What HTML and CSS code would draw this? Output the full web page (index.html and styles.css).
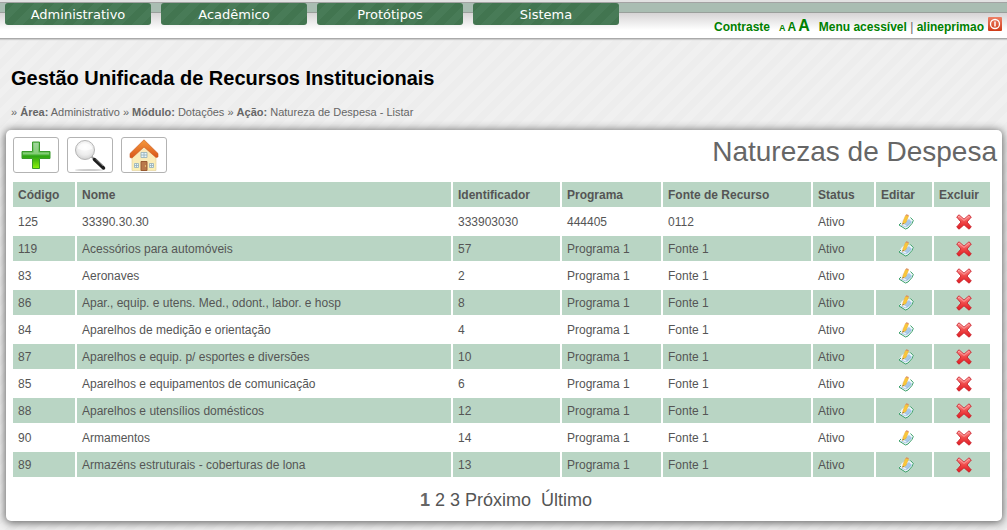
FILE: index.html
```html
<!DOCTYPE html>
<html lang="pt-BR">
<head>
<meta charset="utf-8">
<title>Gestão Unificada de Recursos Institucionais</title>
<link rel="stylesheet" href="styles.css">
</head>
<body>
<svg class="sprite" width="0" height="0" aria-hidden="true">
  <defs>
    <linearGradient id="leaf" x1="0" y1="0" x2="0" y2="1"><stop offset="0" stop-color="#7cc576"/><stop offset=".45" stop-color="#4fb83c"/><stop offset=".55" stop-color="#2ea513"/><stop offset="1" stop-color="#8df40c"/></linearGradient>
    <linearGradient id="roof" x1="0" y1="0" x2="0" y2="1"><stop offset="0" stop-color="#f59a3c"/><stop offset="1" stop-color="#d9541a"/></linearGradient>
    <linearGradient id="wall" x1="0" y1="0" x2="0" y2="1"><stop offset="0" stop-color="#f8e6bd"/><stop offset="1" stop-color="#fbf0b4"/></linearGradient>
    <radialGradient id="glass" cx=".5" cy=".35" r=".6"><stop offset="0" stop-color="#fff"/><stop offset=".7" stop-color="#ececec"/><stop offset="1" stop-color="#d6d6d6"/></radialGradient>
    <linearGradient id="ruby" x1="0" y1="0" x2="0" y2="1"><stop offset="0" stop-color="#ff9a9a"/><stop offset=".5" stop-color="#f04848"/><stop offset="1" stop-color="#e01a20"/></linearGradient>
    <linearGradient id="power" x1="0" y1="0" x2="0" y2="1"><stop offset="0" stop-color="#ee8066"/><stop offset="1" stop-color="#cf3a17"/></linearGradient>
    <symbol id="edit" viewBox="0 0 16 16">
      <path d="M4 6 7 4 14 4.500 15.500 7.500 10 14.500 7 14.500 1 10.500Z" fill="#f1f8fc"/>
      <path d="M5 9.500 11 5 14 8 9.500 12.500Z" fill="#a8c9e8"/>
      <path d="M12.500 3.500 15.300 6.500 14 9.500 10 14 7.500 15 1 11 3 9" fill="none" stroke="#3ca06a"/>
      <path d="M3 11 8 13 13 8.500" fill="none" stroke="#8fb4d8" stroke-width=".7"/>
      <path d="M7.500 1.500 10.500 2 8 8.500 4.500 10.500 5 7.500Z" fill="#f9c83a" stroke="#eda93a" stroke-width=".5"/>
      <path d="m7.500 1.500.8-1.300 2.400.7-.2 1.100Z" fill="#dd8b54"/><path d="m4.500 10.500.3-1.500 1 .6Z" fill="#444"/>
    </symbol>
    <symbol id="remove" viewBox="0 0 16 16">
      <path d="M3 .8 8 5.200 13 .8 15.300 3 11 8 15.300 13 13 15.200 8 10.800 3 15.200.7 13 5 8 .7 3Z" fill="url(#ruby)" stroke="#c8202a" stroke-width=".9" stroke-linejoin="round"/>
      <path d="m2 3 1.200-1L8 6.400l4.800-4.400" fill="none" stroke="#ffb3b0" stroke-width=".8"/>
    </symbol>
  </defs>
</svg>
<header class="topbar">
  <nav class="menu">
    <a href="#">Administrativo</a>
    <a href="#">Acadêmico</a>
    <a href="#">Protótipos</a>
    <a href="#">Sistema</a>
  </nav>
  <div class="tools">
    <a class="contrast" href="#">Contraste</a>
    <span class="sizes"><a class="small" href="#">A</a><a class="medium" href="#">A</a><a class="large" href="#">A</a></span>
    <span class="account"><a href="#">Menu acessível</a> <span class="bar">|</span> <a href="#">alineprimao</a></span>
    <a class="logout" href="#" aria-label="Sair"><svg width="14" height="14" viewBox="0 0 14 14"><rect width="14" height="14" rx="1" fill="url(#power)"/><circle cx="7" cy="7" r="4.500" fill="none" stroke="#fff" stroke-width="1.300"/><path d="M7 4.500v5" stroke="#fff" stroke-width="1.500"/></svg></a>
  </div>
</header>
<div class="heading">
  <h1>Gestão Unificada de Recursos Institucionais</h1>
  <p class="crumbs">» <b>Área:</b> Administrativo » <b>Módulo:</b> Dotações » <b>Ação:</b> Natureza de Despesa - Listar</p>
</div>
<main class="panel">
  <div class="panel-head">
    <div class="actions">
      <button type="button" aria-label="Adicionar"><svg width="32" height="32" viewBox="0 0 32 32"><path d="M12.500 3h7v9.500H30v7H19.500v10h-7v-10H2v-7h10.500Z" fill="url(#leaf)" stroke="#3a9a2c" stroke-linejoin="round"/><path d="M13.500 4h5v9.500H29v2H3v-2h10.500Z" fill="#fff" opacity=".3"/></svg></button>
      <button type="button" aria-label="Pesquisar"><svg width="32" height="32" viewBox="0 0 32 32"><ellipse cx="15" cy="31" rx="14" ry="1" fill="#ccc"/><path d="m17.500 17.500 4 4" stroke="#999" stroke-width="2"/><circle cx="11" cy="11" r="9.500" fill="url(#glass)" stroke="#b5b5b5"/><path d="M3.500 9.500a8 8 0 0 1 15 0q-7 4-15 0Z" fill="#fff" opacity=".7"/><path d="m20.500 20.500 9 8.500" stroke="#1c1c1c" stroke-width="3.500" stroke-linecap="round"/><path d="m21.500 20 7.500 7" stroke="#777"/></svg></button>
      <button type="button" aria-label="Início"><svg width="32" height="32" viewBox="0 0 32 32"><path d="M4 15 16 5l12 10v16.500H4Z" fill="url(#wall)" stroke="#e3cf95" stroke-width=".6"/><path d="M16 .8 30 14.500v3.500l-2 .5L16 8 4 19l-2-.5v-4Z" fill="url(#roof)" stroke="#c9581c" stroke-width=".6"/><g fill="#e6f4fb" stroke="#93aeb8" stroke-width=".8"><path d="M13 13.500h6v5h-6ZM16 13.500v5M13 16h6M6.500 24.500h4v4h-4ZM8.500 24.500v4M6.500 26.500h4M21.500 24.500h4v4h-4ZM23.500 24.500v4M21.500 26.500h4"/></g><path d="M13 22.500h6v9h-6Z" fill="#b9794a" stroke="#9a5b32"/><circle cx="17.500" cy="27" r=".7" fill="#f6d67a"/></svg></button>
    </div>
    <h2>Naturezas de Despesa</h2>
  </div>
  <table class="list">
    <colgroup><col class="c-code"><col><col class="c-id"><col class="c-program"><col class="c-source"><col class="c-status"><col class="c-action"><col class="c-action"></colgroup>
    <thead>
      <tr><th>Código</th><th>Nome</th><th>Identificador</th><th>Programa</th><th>Fonte de Recurso</th><th>Status</th><th>Editar</th><th>Excluir</th></tr>
    </thead>
    <tbody>
      <tr><td>125</td><td>33390.30.30</td><td>333903030</td><td>444405</td><td>0112</td><td>Ativo</td><td class="action"><a href="#" aria-label="Editar"><svg><use href="#edit"/></svg></a></td><td class="action"><a href="#" aria-label="Excluir"><svg><use href="#remove"/></svg></a></td></tr>
      <tr><td>119</td><td>Acessórios para automóveis</td><td>57</td><td>Programa 1</td><td>Fonte 1</td><td>Ativo</td><td class="action"><a href="#" aria-label="Editar"><svg><use href="#edit"/></svg></a></td><td class="action"><a href="#" aria-label="Excluir"><svg><use href="#remove"/></svg></a></td></tr>
      <tr><td>83</td><td>Aeronaves</td><td>2</td><td>Programa 1</td><td>Fonte 1</td><td>Ativo</td><td class="action"><a href="#" aria-label="Editar"><svg><use href="#edit"/></svg></a></td><td class="action"><a href="#" aria-label="Excluir"><svg><use href="#remove"/></svg></a></td></tr>
      <tr><td>86</td><td>Apar., equip. e utens. Med., odont., labor. e hosp</td><td>8</td><td>Programa 1</td><td>Fonte 1</td><td>Ativo</td><td class="action"><a href="#" aria-label="Editar"><svg><use href="#edit"/></svg></a></td><td class="action"><a href="#" aria-label="Excluir"><svg><use href="#remove"/></svg></a></td></tr>
      <tr><td>84</td><td>Aparelhos de medição e orientação</td><td>4</td><td>Programa 1</td><td>Fonte 1</td><td>Ativo</td><td class="action"><a href="#" aria-label="Editar"><svg><use href="#edit"/></svg></a></td><td class="action"><a href="#" aria-label="Excluir"><svg><use href="#remove"/></svg></a></td></tr>
      <tr><td>87</td><td>Aparelhos e equip. p/ esportes e diversões</td><td>10</td><td>Programa 1</td><td>Fonte 1</td><td>Ativo</td><td class="action"><a href="#" aria-label="Editar"><svg><use href="#edit"/></svg></a></td><td class="action"><a href="#" aria-label="Excluir"><svg><use href="#remove"/></svg></a></td></tr>
      <tr><td>85</td><td>Aparelhos e equipamentos de comunicação</td><td>6</td><td>Programa 1</td><td>Fonte 1</td><td>Ativo</td><td class="action"><a href="#" aria-label="Editar"><svg><use href="#edit"/></svg></a></td><td class="action"><a href="#" aria-label="Excluir"><svg><use href="#remove"/></svg></a></td></tr>
      <tr><td>88</td><td>Aparelhos e utensílios domésticos</td><td>12</td><td>Programa 1</td><td>Fonte 1</td><td>Ativo</td><td class="action"><a href="#" aria-label="Editar"><svg><use href="#edit"/></svg></a></td><td class="action"><a href="#" aria-label="Excluir"><svg><use href="#remove"/></svg></a></td></tr>
      <tr><td>90</td><td>Armamentos</td><td>14</td><td>Programa 1</td><td>Fonte 1</td><td>Ativo</td><td class="action"><a href="#" aria-label="Editar"><svg><use href="#edit"/></svg></a></td><td class="action"><a href="#" aria-label="Excluir"><svg><use href="#remove"/></svg></a></td></tr>
      <tr><td>89</td><td>Armazéns estruturais - coberturas de lona</td><td>13</td><td>Programa 1</td><td>Fonte 1</td><td>Ativo</td><td class="action"><a href="#" aria-label="Editar"><svg><use href="#edit"/></svg></a></td><td class="action"><a href="#" aria-label="Excluir"><svg><use href="#remove"/></svg></a></td></tr>
    </tbody>
  </table>
  <nav class="pager" aria-label="Páginas"><b>1</b> <a href="#">2</a> <a href="#">3</a> <a href="#">Próximo</a> &nbsp;<a href="#">Último</a></nav>
</main>
</body>
</html>
```
FILE: styles.css
```css
* { box-sizing: border-box; }
body {
  margin: 0;
  font: 12px/17px "Liberation Sans", Arial, sans-serif;
  color: #555;
  background: repeating-linear-gradient(135deg, #ededed 0 7px, #f0f0f0 7px 14px);
}
a { color: inherit; text-decoration: none; }
h1, h2, p { margin: 0; }
svg { display: block; }
.sprite { position: absolute; }

.topbar {
  display: flex;
  justify-content: space-between;
  align-items: flex-start;
  height: 39px;
  padding: 3px 5px 0;
  border-bottom: 1px solid #aaa;
  box-shadow: 0 1px 1px #ccc;
  background: linear-gradient(#e2e2e2 0 2px, #a3a3a3 2px 3px, #a9bdb2 3px 12px, #999f9b 12px 13px, #d6d4d5 13px, #fff 30px);
}
.menu { display: flex; gap: 10px; }
.menu a {
  width: 146px;
  height: 22px;
  border-radius: 3px;
  background: repeating-linear-gradient(135deg, #427550 0 7px, #487b57 7px 14px);
  color: #fff;
  font: 13px/24px "DejaVu Sans", Verdana, sans-serif;
  text-align: center;
}
.tools {
  display: flex;
  align-items: baseline;
  padding-top: 13px;
  color: #008000;
  font-weight: bold;
  line-height: 20px;
}
.sizes { display: flex; align-items: baseline; gap: 2px; margin: 0 9px; }
.small { font-size: 9px; }
.medium { font-size: 12px; }
.large { font-size: 16px; }
.bar { color: #666; font-weight: normal; }
.logout { margin-left: 4px; }

.heading { padding: 27px 11px 11px; }
h1 { font-size: 20px; line-height: 24px; color: #000; }
.crumbs { margin-top: 15px; font-size: 11px; line-height: 14px; color: #666; }

.panel {
  margin: 0 5px 9px 6px;
  padding: 7px 5px 10px;
  border-radius: 5px;
  background: #fff;
  box-shadow: 0 1px 8px 1px #666;
}
.panel-head { display: flex; justify-content: space-between; padding-left: 2px; }
.actions { display: flex; gap: 8px; }
.actions button {
  display: flex;
  justify-content: center;
  align-items: center;
  width: 46px;
  height: 36px;
  padding: 0;
  border: 1px solid #b3b3b3;
  border-radius: 3px;
  background: #fff;
}
h2 { font-size: 28px; font-weight: normal; line-height: 29px; color: #666; }

.list {
  width: calc(100% - 5px);
  margin-top: 7px;
  table-layout: fixed;
  border-spacing: 2px;
}
.c-code { width: 62px; }
.c-id { width: 107px; }
.c-program { width: 99px; }
.c-source { width: 148px; }
.c-status { width: 61px; }
.c-action { width: 56px; }
th, td { height: 25px; padding: 1px 5px 0; text-align: left; }
td.action { padding: 0 3px 0 7px; }
th, tbody tr:nth-child(even) td { background: #b9d5c4; }
td svg { width: 16px; height: 16px; margin: 0 auto; }

.pager { margin-top: 10px; padding-left: 4px; font-size: 18px; line-height: 22px; text-align: center; }
.pager b { color: #666; }
```
